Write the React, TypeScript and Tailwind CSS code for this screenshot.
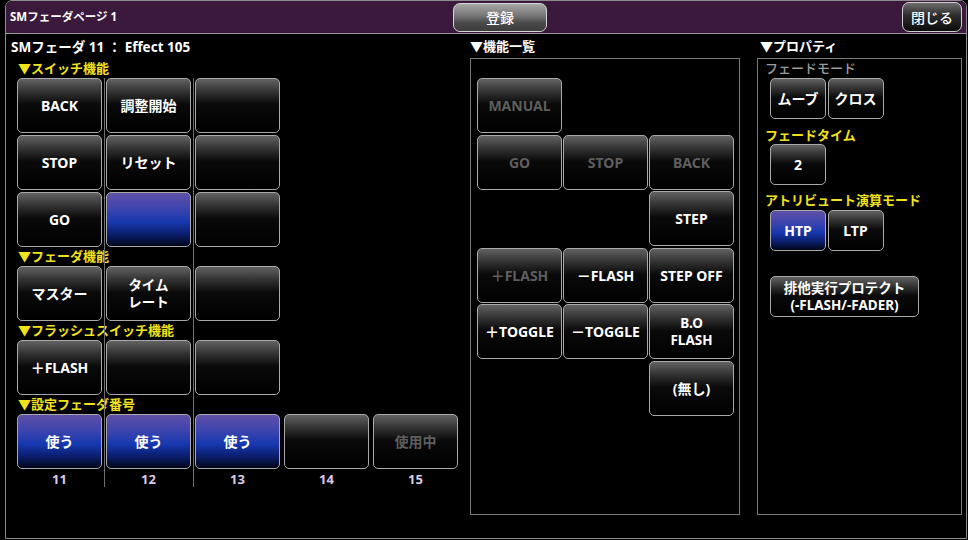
import React from "react";

type BtnProps = {
  children?: React.ReactNode;
  blue?: boolean;
  dim?: boolean;
  className?: string;
};

const Btn = ({ children, blue, dim, className = "" }: BtnProps) => {
  const bg = blue
    ? "bg-[linear-gradient(to_bottom,#5f50a6_0%,#3f45ae_28%,#1638b0_55%,#0b1e6c_78%,#000518_100%)]"
    : "bg-[linear-gradient(to_bottom,#626262_0%,#323232_24%,#0a0a0a_48%,#000_100%)]";
  return (
    <div
      className={`${className} ${bg} border border-[#a9a9a9] rounded-[5px] flex flex-col items-center justify-center text-center font-bold text-[14px] leading-[17px] ${
        dim ? "text-[#5e5e5e]" : "text-white"
      }`}
    >
      {children}
    </div>
  );
};

const Section = ({ children }: { children: React.ReactNode }) => (
  <div className="h-[19px] pl-[12px] flex items-center text-[13px] font-bold text-[#f2e21b] leading-none">
    {children}
  </div>
);

const Cell = ({ children, blue, dim }: BtnProps) => (
  <Btn blue={blue} dim={dim} className="w-[85px] h-[55px]">
    {children}
  </Btn>
);

const Two = ({ a, b }: { a: string; b: string }) => (
  <div className="flex flex-col gap-[1px] leading-[16px] text-[13.5px]">
    <span>{a}</span>
    <span>{b}</span>
  </div>
);

export default function App() {
  return (
    <div className="w-[968px] h-[540px] bg-black overflow-hidden pl-[5px] pr-[1px] pb-[1px] [font-family:'Noto_Sans','Noto_Sans_CJK_JP',sans-serif]">
      <div className="h-full flex flex-col border border-[#8c8c8c] rounded-t-[7px]">
        {/* title bar */}
        <div className="h-[33px] shrink-0 flex items-center bg-[#3b193c] border-b border-[#9a9a9a] rounded-t-[6px]">
          <div className="w-[447px] pl-[4px] text-[11.5px] font-bold text-white">SMフェーダページ 1</div>
          <div className="w-[94px] h-[29px] rounded-[7px] border border-[#d6d6d6] bg-[linear-gradient(to_bottom,#a8a8a8_0%,#737373_45%,#4a4a4a_70%,#3c3c3c_100%)] flex items-center justify-center text-white text-[14px] font-medium">
            登録
          </div>
          <div className="flex-1" />
          <div className="w-[60px] h-[30px] mr-[4px] rounded-[7px] border border-[#cfcfcf] bg-[linear-gradient(to_bottom,#6c6c6c_0%,#2c2c2c_45%,#0c0c0c_100%)] flex items-center justify-center text-white text-[14px] font-medium">
            閉じる
          </div>
        </div>

        {/* body */}
        <div className="flex-1 flex">
          {/* left */}
          <div className="w-[464px] relative">
            <div className="absolute left-[98px] top-[44px] w-px h-[409px] bg-[#6e6e6e]" />
            <div className="absolute left-[187px] top-[44px] w-px h-[409px] bg-[#6e6e6e]" />
            <div className="h-[24px] pt-[2px] pl-[5px] flex items-center text-[13.5px] font-bold text-white">
              SMフェーダ 11 ： Effect 105
            </div>
            <div className="h-[20px] pl-[12px] flex items-center text-[13px] font-bold text-[#f2e21b] leading-none">
              ▼スイッチ機能
            </div>
            <div className="ml-[11px] grid grid-cols-[85px_85px_85px] gap-x-[4px] gap-y-[2px] relative">
              <Cell>BACK</Cell>
              <Cell>調整開始</Cell>
              <Cell />
              <Cell>STOP</Cell>
              <Cell>リセット</Cell>
              <Cell />
              <Cell>GO</Cell>
              <Cell blue />
              <Cell />
            </div>
            <Section>▼フェーダ機能</Section>
            <div className="ml-[11px] flex gap-[4px] relative">
              <Cell>マスター</Cell>
              <Cell>
                <Two a="タイム" b="レート" />
              </Cell>
              <Cell />
            </div>
            <Section>▼フラッシュスイッチ機能</Section>
            <div className="ml-[11px] flex gap-[4px] relative">
              <Cell>＋FLASH</Cell>
              <Cell />
              <Cell />
            </div>
            <Section>▼設定フェーダ番号</Section>
            <div className="ml-[11px] flex gap-[4px] relative">
              <Cell blue>使う</Cell>
              <Cell blue>使う</Cell>
              <Cell blue>使う</Cell>
              <Cell />
              <Cell dim>使用中</Cell>
            </div>
            <div className="ml-[11px] flex gap-[4px] h-[22px] items-center text-[13px] font-bold text-[#dccbe8]">
              {["11", "12", "13", "14", "15"].map((n) => (
                <div key={n} className="w-[85px] text-center">
                  {n}
                </div>
              ))}
            </div>
          </div>

          {/* middle */}
          <div className="w-[270px] flex flex-col">
            <div className="h-[24px] pt-[2px] flex items-center text-[13px] font-bold text-white">▼機能一覧</div>
            <div className="h-[457px] border border-[#7a7a7a] pl-[6px] pt-[19px]">
              <div className="grid grid-cols-[85px_85px_85px] auto-rows-[55px] gap-x-[1px] gap-y-[1.5px]">
                <Cell dim>MANUAL</Cell>
                <div />
                <div />
                <Cell dim>GO</Cell>
                <Cell dim>STOP</Cell>
                <Cell dim>BACK</Cell>
                <div />
                <div />
                <Cell>STEP</Cell>
                <Cell dim>＋FLASH</Cell>
                <Cell>－FLASH</Cell>
                <Cell>STEP OFF</Cell>
                <Cell>＋TOGGLE</Cell>
                <Cell>－TOGGLE</Cell>
                <Cell>
                  <Two a="B.O" b="FLASH" />
                </Cell>
                <div />
                <div />
                <Cell>(無し)</Cell>
              </div>
            </div>
          </div>

          <div className="w-[17px]" />

          {/* right */}
          <div className="w-[205px] flex flex-col">
            <div className="h-[24px] pt-[2px] pl-[3px] flex items-center text-[13px] font-bold text-white">▼プロパティ</div>
            <div className="h-[457px] border border-[#7a7a7a]">
              <div className="h-[19px] pl-[7px] flex items-center text-[13px] font-medium text-[#9c9c9c] leading-none">
                フェードモード
              </div>
              <div className="ml-[12px] flex gap-[1.5px]">
                <Btn className="w-[56px] h-[41px]">ムーブ</Btn>
                <Btn className="w-[56px] h-[41px]">クロス</Btn>
              </div>
              <div className="h-[25px] pl-[7px] pb-[1px] flex items-end text-[13px] font-bold text-[#f2e21b] leading-[16px]">
                フェードタイム
              </div>
              <div className="ml-[12px] flex">
                <Btn className="w-[56px] h-[41px]">2</Btn>
              </div>
              <div className="h-[25px] pl-[7px] pb-[2px] flex items-end text-[13px] font-bold text-[#f2e21b] leading-[16px]">
                アトリビュート演算モード
              </div>
              <div className="ml-[12px] flex gap-[1.5px]">
                <Btn blue className="w-[56px] h-[41px]">
                  HTP
                </Btn>
                <Btn className="w-[56px] h-[41px]">LTP</Btn>
              </div>
              <div className="ml-[12px] mt-[25px] flex">
                <Btn className="w-[149px] h-[41px] !text-[13.5px]">
                  <span>排他実行プロテクト</span>
                  <span>(-FLASH/-FADER)</span>
                </Btn>
              </div>
            </div>
          </div>
        </div>
      </div>
    </div>
  );
}
